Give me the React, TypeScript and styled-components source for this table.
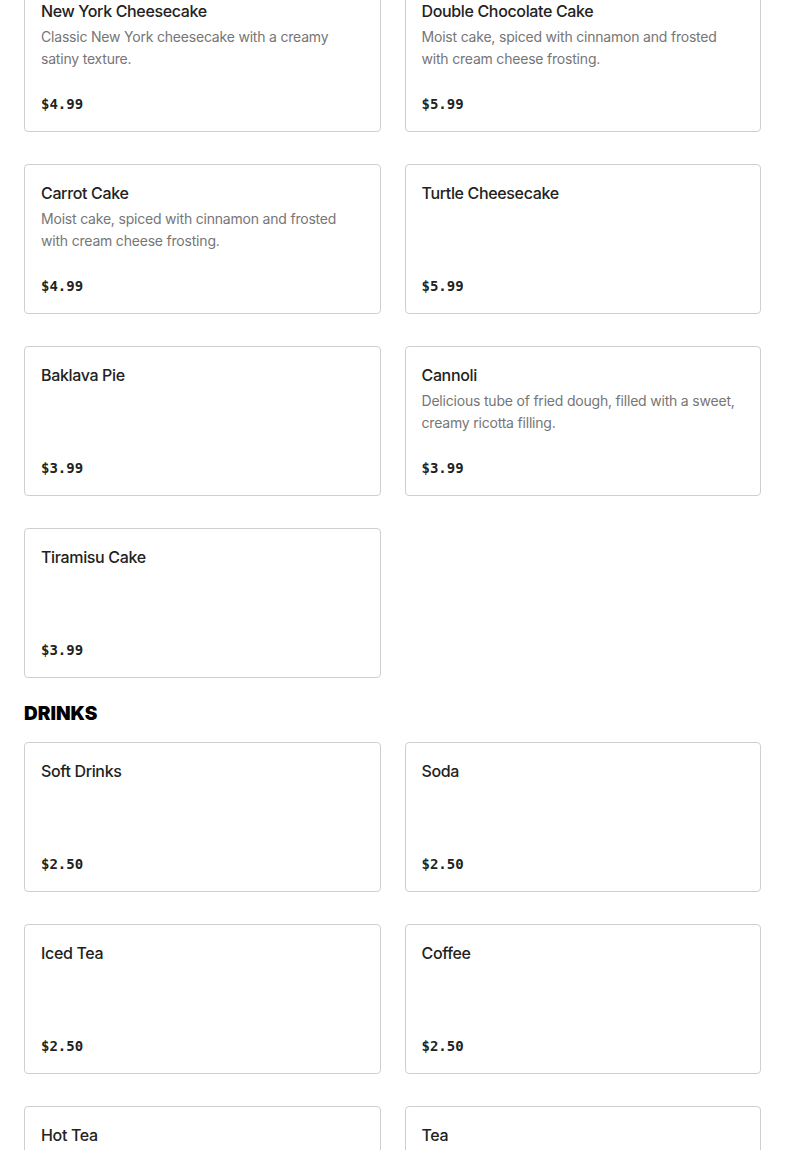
import React from "react";
import styled, { createGlobalStyle } from "styled-components";

const Global = createGlobalStyle`
  html, body { margin: 0; padding: 0; background: #fff; }
  body { font-family: Inter, "Noto Sans", Arial, sans-serif; color: #222; }
`;

const Page = styled.div`
  padding: 0 24px;
  margin-top: -18px;
`;

const Section = styled.section`
  display: flex;
  flex-direction: column;
`;

const Heading = styled.h2`
  margin: 24px 0 16px;
  font-size: 19px;
  line-height: 24px;
  font-weight: 900;
  letter-spacing: 0;
  color: #000;
  text-transform: uppercase;
`;

const Grid = styled.div`
  display: grid;
  grid-template-columns: 1fr 1fr;
  column-gap: 24px;
  row-gap: 32px;
`;

const Card = styled.div`
  box-sizing: border-box;
  height: 150px;
  border: 1px solid #cfcfcf;
  border-radius: 4px;
  padding: 16px 16px 17px;
  display: flex;
  flex-direction: column;
`;

const Title = styled.div`
  font-size: 16px;
  line-height: 24px;
  font-weight: 500;
  letter-spacing: -0.35px;
  color: #222;
`;

const Desc = styled.div`
  margin-top: 3px;
  font-size: 14px;
  line-height: 22px;
  letter-spacing: -0.2px;
  color: #767676;
`;

const Price = styled.div`
  margin-top: auto;
  font-family: "DejaVu Sans Mono", "Liberation Mono", monospace;
  font-weight: 700;
  font-size: 14px;
  line-height: 20px;
  color: #222;
`;

type Item = { name: string; desc?: string; price: string };

const desserts: Item[] = [
  { name: "New York Cheesecake", desc: "Classic New York cheesecake with a creamy satiny texture.", price: "$4.99" },
  { name: "Double Chocolate Cake", desc: "Moist cake, spiced with cinnamon and frosted with cream cheese frosting.", price: "$5.99" },
  { name: "Carrot Cake", desc: "Moist cake, spiced with cinnamon and frosted with cream cheese frosting.", price: "$4.99" },
  { name: "Turtle Cheesecake", price: "$5.99" },
  { name: "Baklava Pie", price: "$3.99" },
  { name: "Cannoli", desc: "Delicious tube of fried dough, filled with a sweet, creamy ricotta filling.", price: "$3.99" },
  { name: "Tiramisu Cake", price: "$3.99" },
];

const drinks: Item[] = [
  { name: "Soft Drinks", price: "$2.50" },
  { name: "Soda", price: "$2.50" },
  { name: "Iced Tea", price: "$2.50" },
  { name: "Coffee", price: "$2.50" },
  { name: "Hot Tea", price: "$2.50" },
  { name: "Tea", price: "$2.50" },
];

const ItemCard = ({ item }: { item: Item }) => (
  <Card>
    <Title>{item.name}</Title>
    {item.desc && <Desc>{item.desc}</Desc>}
    <Price>{item.price}</Price>
  </Card>
);

export default function App() {
  return (
    <>
      <Global />
      <Page>
        <Section>
          <Grid>
            {desserts.map((d) => (
              <ItemCard key={d.name} item={d} />
            ))}
          </Grid>
        </Section>
        <Section>
          <Heading>Drinks</Heading>
          <Grid>
            {drinks.map((d) => (
              <ItemCard key={d.name} item={d} />
            ))}
          </Grid>
        </Section>
      </Page>
    </>
  );
}
